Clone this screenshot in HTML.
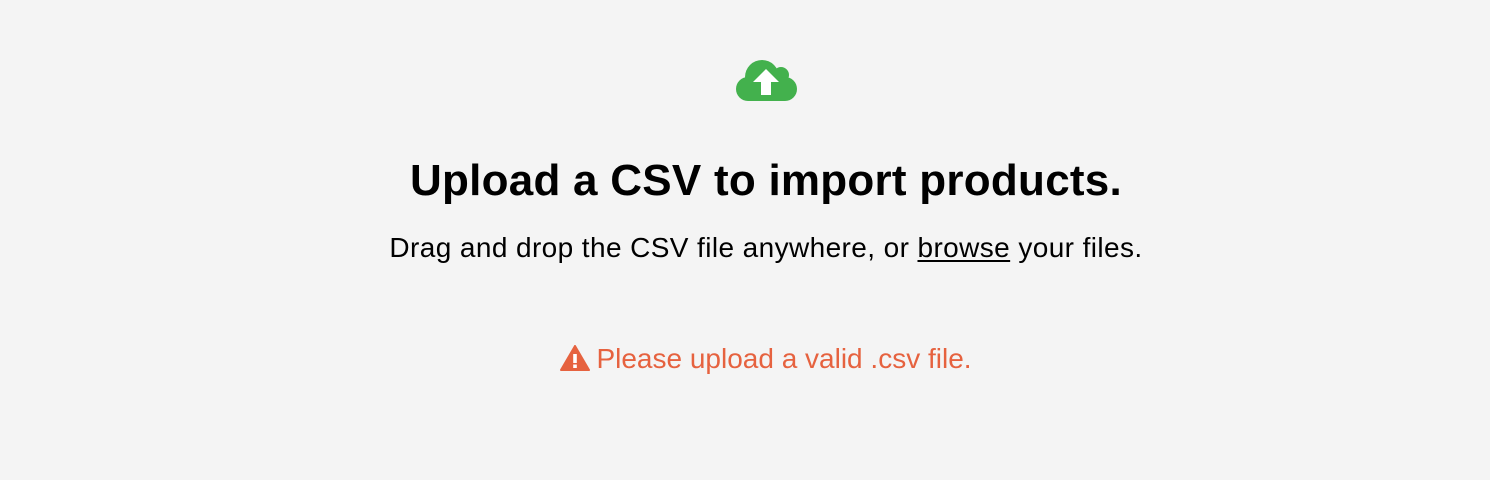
<!DOCTYPE html>
<html><head><style>
body{margin:0;width:1490px;height:480px;background:#f4f4f4;font-family:"Liberation Sans",sans-serif;color:#000;position:relative;overflow:hidden}
.c{position:absolute;left:21px;width:1490px;text-align:center;white-space:nowrap}
h1{font-size:44px;font-weight:bold;top:156px;margin:0;letter-spacing:0.25px}
.s{font-size:28px;top:232px;letter-spacing:0.4px}
.s u{text-decoration-thickness:2px;text-underline-offset:3px}
.e{font-size:28px;top:343px;color:#e6623f;letter-spacing:0}
</style></head><body>
<svg style="position:absolute;left:735px;top:57px" width="62" height="46" viewBox="0 0 62 46">
<g fill="#43b14d">
<circle cx="27" cy="20" r="17"/><circle cx="46" cy="18" r="8"/><circle cx="13" cy="32" r="12"/><circle cx="50" cy="32" r="12"/>
<rect x="13" y="24" width="37" height="20"/>
</g>
<path d="M31 12 L18 25 H26 V38 H36 V25 H44 Z" fill="#fff"/>
</svg>
<h1 class="c">Upload a CSV to import products.</h1>
<div class="c s">Drag and drop the CSV file anywhere, or <u>browse</u> your files.</div>
<div class="c e"><svg width="30" height="26" viewBox="0 0 30 26" style="vertical-align:-3px;margin-right:6px"><path d="M15 1 L29 25 H1 Z" fill="#e6623f" stroke="#e6623f" stroke-width="2" stroke-linejoin="round"/><rect x="13.2" y="9" width="3.6" height="9" fill="#fff"/><rect x="13.2" y="19.5" width="3.6" height="3.5" fill="#fff"/></svg>Please upload a valid .csv file.</div>
</body></html>
